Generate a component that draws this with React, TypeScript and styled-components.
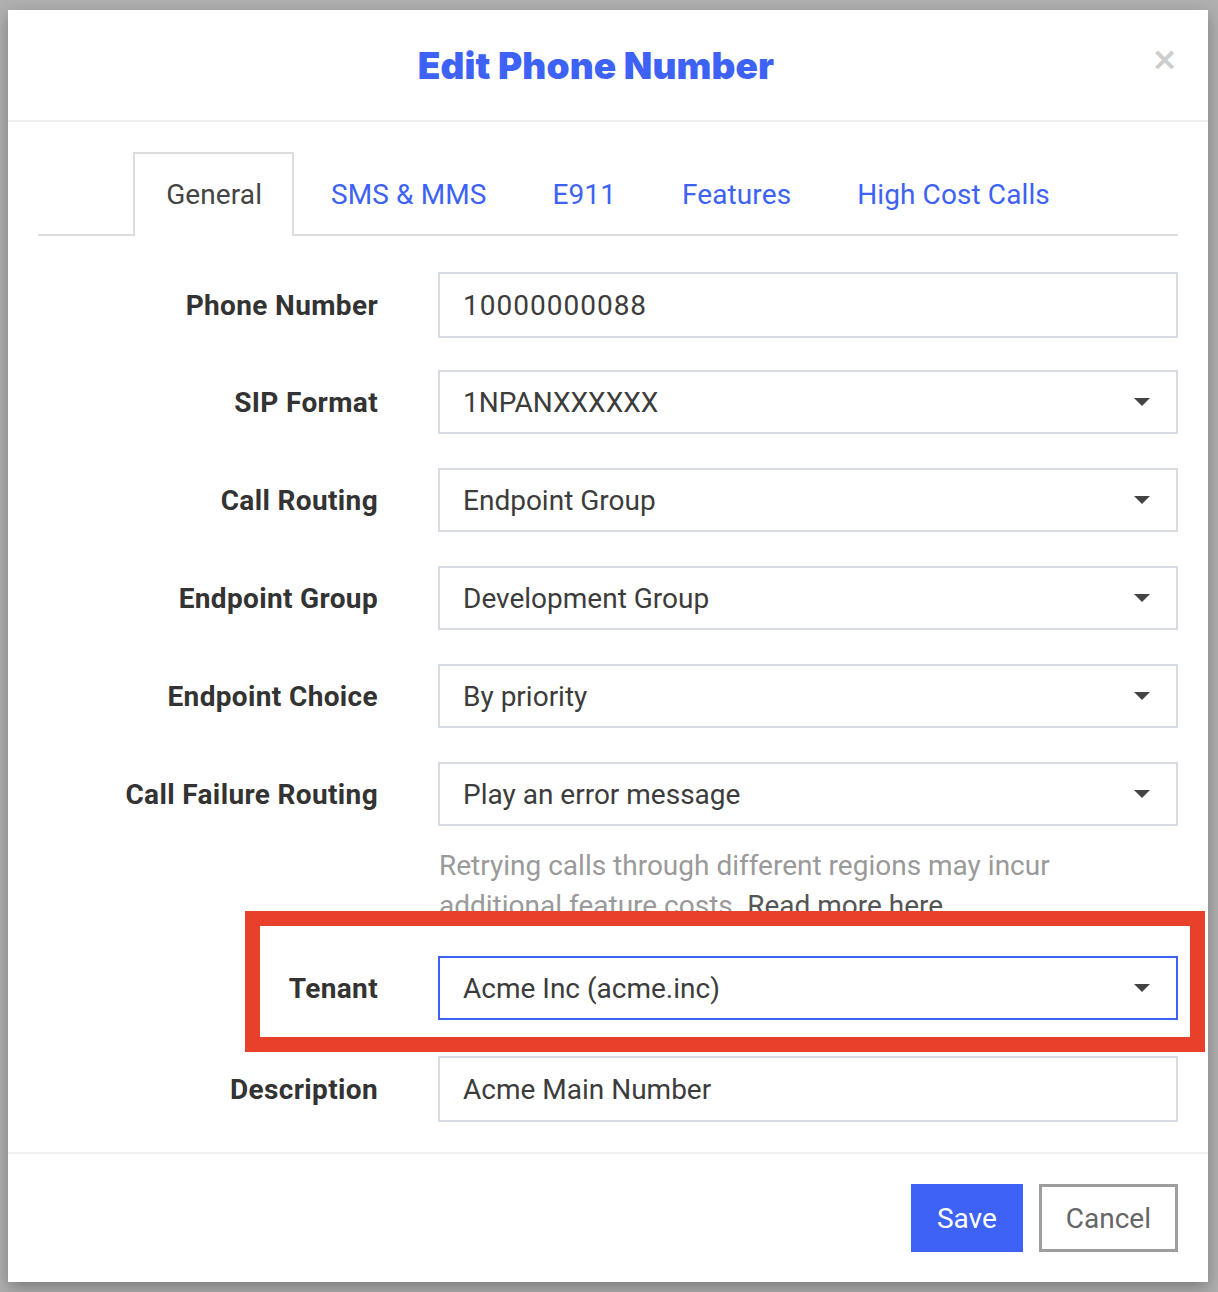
import React from 'react';
import styled, { createGlobalStyle } from 'styled-components';

const Global = createGlobalStyle`
  html, body { margin: 0; padding: 0; background: #b0b0b0; }
  body { font-family: Roboto, "Liberation Sans", Arial, sans-serif; }
  * { box-sizing: border-box; }
`;

const BLUE = '#3d62f5';

const Backdrop = styled.div`
  min-height: 1292px;
  padding: 10px 10px 10px 8px;
  background: #b0b0b0;
`;

const Dialog = styled.div`
  position: relative;
  width: 1200px;
  background: #fff;
  box-shadow: 0 6px 16px rgba(0, 0, 0, 0.3);
  display: flex;
  flex-direction: column;
`;

const Header = styled.header`
  position: relative;
  height: 112px;
  border-bottom: 2px solid #efefef;
  display: flex;
  align-items: center;
  justify-content: center;
`;

const Title = styled.h1`
  margin: 0;
  font-family: Inter, "Open Sans", sans-serif;
  font-weight: 900;
  font-size: 37px;
  letter-spacing: 0.1px;
  color: ${BLUE};
  transform: translateX(-12px);
`;

const Close = styled.span`
  position: absolute;
  right: 30px;
  top: 33px;
  font-family: "DejaVu Sans", sans-serif;
  font-size: 32px;
  font-weight: 700;
  color: #cdcdcd;
  line-height: 1;
`;

const Body = styled.div`
  padding: 30px 30px 30px;
`;

const TabBar = styled.nav`
  display: flex;
  justify-content: center;
  gap: 4px;
  height: 84px;
  border-bottom: 2px solid #dddddd;
  padding-right: 4px;
`;

const Tab = styled.div<{ $active?: boolean }>`
  height: 84px;
  padding: 0 30px 2px 31px;
  display: flex;
  align-items: center;
  font-size: 28px;
  letter-spacing: 0.1px;
  color: ${(p) => (p.$active ? '#444' : BLUE)};
  border: 2px solid ${(p) => (p.$active ? '#dddddd' : 'transparent')};
  border-bottom: none;
  background: ${(p) => (p.$active ? '#fff' : 'transparent')};
  margin-right: ${(p) => (p.$active ? 0 : -3)}px;
`;

const Form = styled.div`
  margin-top: 36px;
  display: grid;
  grid-template-columns: 340px 740px;
  column-gap: 60px;
`;

const Label = styled.div<{ $h: number; $mb: number }>`
  height: ${(p) => p.$h}px;
  margin-bottom: ${(p) => p.$mb}px;
  display: flex;
  align-items: center;
  justify-content: flex-end;
  font-size: 28px;
  font-weight: 700;
  letter-spacing: 0.35px;
  color: #333;
`;

const Field = styled.div<{ $h: number; $mb: number; $focus?: boolean }>`
  height: ${(p) => p.$h}px;
  margin-bottom: ${(p) => p.$mb}px;
  border: 2px solid ${(p) => (p.$focus ? BLUE : '#d8dbe1')};
  padding: 0 24px 0 23px;
  display: flex;
  align-items: center;
  justify-content: space-between;
  font-size: 28px;
  color: #3c3c3c;
`;

const Value = styled.span<{ $digits?: boolean }>`
  letter-spacing: ${(p) => (p.$digits ? '1px' : '0')};
`;

const Caret = styled.span`
  width: 0;
  height: 0;
  border-left: 8px solid transparent;
  border-right: 8px solid transparent;
  border-top: 8px solid #444;
  margin-right: 2px;
`;

const Spacer = styled.div``;

const Help = styled.p`
  margin: 20px 0 30px;
  font-size: 28px;
  line-height: 40px;
  color: #9a9a9a;
  padding-left: 1px;
`;

const HelpLink = styled.span`
  color: #555;
`;

const Footer = styled.footer`
  border-top: 2px solid #f0f0f0;
  padding: 30px;
  display: flex;
  justify-content: flex-end;
  gap: 16px;
`;

const Button = styled.button<{ $primary?: boolean }>`
  height: 68px;
  padding: 0 ${(p) => (p.$primary ? 26 : 24)}px;
  font-family: inherit;
  font-size: 28px;
  background: ${(p) => (p.$primary ? BLUE : '#fff')};
  color: ${(p) => (p.$primary ? '#fff' : '#666')};
  border: ${(p) => (p.$primary ? 'none' : '3px solid #9d9d9d')};
  border-radius: 0;
`;

const Highlight = styled.div`
  position: absolute;
  left: 237px;
  top: 901px;
  width: 960px;
  height: 141px;
  border: 15px solid #e8402a;
  pointer-events: none;
`;

type Row = { label: string; value: string; select?: boolean; h: number; mb: number; focus?: boolean; digits?: boolean };

const rows1: Row[] = [
  { label: 'Phone Number', value: '10000000088', h: 66, mb: 32, digits: true },
  { label: 'SIP Format', value: '1NPANXXXXXX', select: true, h: 64, mb: 34 },
  { label: 'Call Routing', value: 'Endpoint Group', select: true, h: 64, mb: 34 },
  { label: 'Endpoint Group', value: 'Development Group', select: true, h: 64, mb: 34 },
  { label: 'Endpoint Choice', value: 'By priority', select: true, h: 64, mb: 34 },
  { label: 'Call Failure Routing', value: 'Play an error message', select: true, h: 64, mb: 0 },
];

const rows2: Row[] = [
  { label: 'Tenant', value: 'Acme Inc (acme.inc)', select: true, h: 64, mb: 36, focus: true },
  { label: 'Description', value: 'Acme Main Number', h: 66, mb: 0 },
];

const renderRow = (r: Row) => (
  <React.Fragment key={r.label}>
    <Label $h={r.h} $mb={r.mb}>{r.label}</Label>
    <Field $h={r.h} $mb={r.mb} $focus={r.focus}>
      <Value $digits={r.digits}>{r.value}</Value>
      {r.select && <Caret />}
    </Field>
  </React.Fragment>
);

export default function App() {
  return (
    <>
      <Global />
      <Backdrop>
        <Dialog>
          <Header>
            <Title>Edit Phone Number</Title>
            <Close>×</Close>
          </Header>
          <Body>
            <TabBar>
              <Tab $active>General</Tab>
              <Tab>SMS &amp; MMS</Tab>
              <Tab>E911</Tab>
              <Tab>Features</Tab>
              <Tab>High Cost Calls</Tab>
            </TabBar>
            <Form>
              {rows1.map(renderRow)}
              <Spacer />
              <Help>
                Retrying calls through different regions may incur additional feature costs.{' '}
                <HelpLink>Read more here</HelpLink>
              </Help>
              {rows2.map(renderRow)}
            </Form>
          </Body>
          <Footer>
            <Button $primary>Save</Button>
            <Button>Cancel</Button>
          </Footer>
          <Highlight />
        </Dialog>
      </Backdrop>
    </>
  );
}
